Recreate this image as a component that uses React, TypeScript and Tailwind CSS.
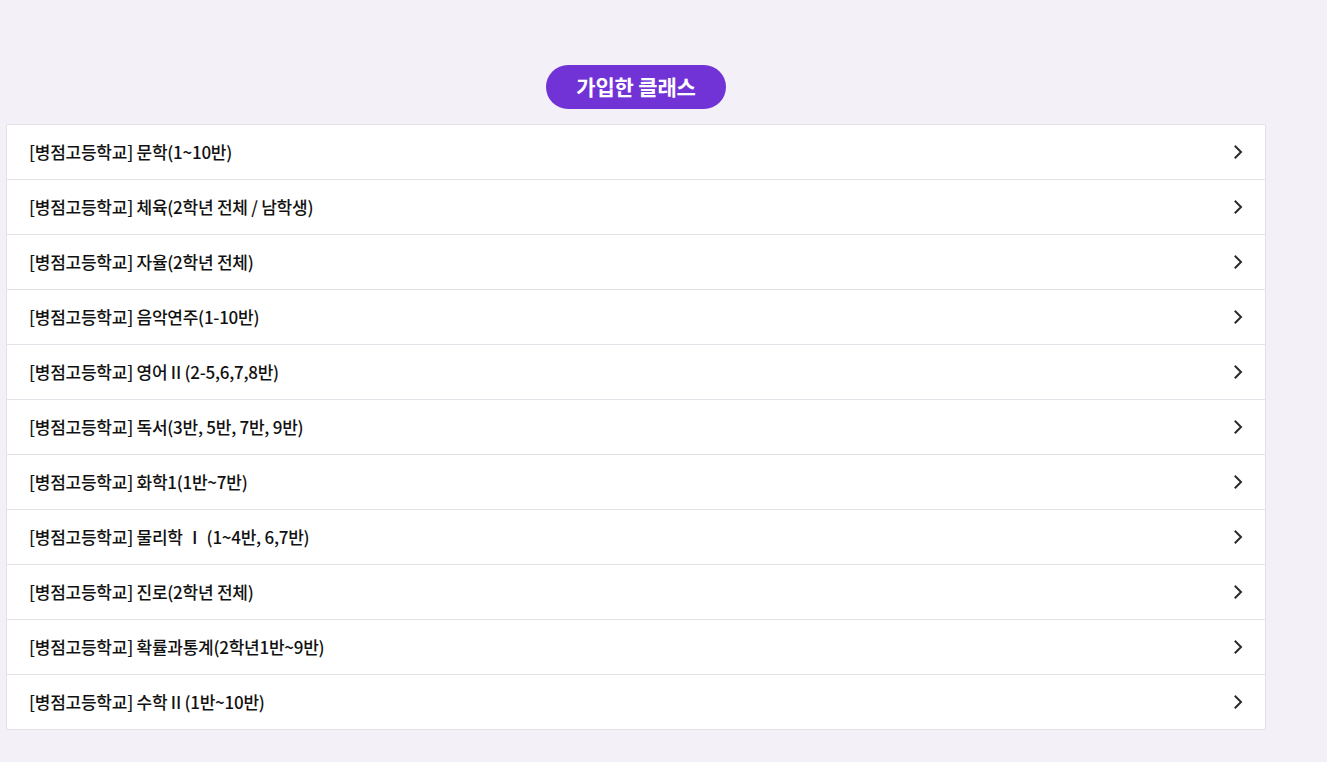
import React from "react";

const items = [
  "[병점고등학교] 문학(1~10반)",
  "[병점고등학교] 체육(2학년 전체 / 남학생)",
  "[병점고등학교] 자율(2학년 전체)",
  "[병점고등학교] 음악연주(1-10반)",
  "[병점고등학교] 영어 II (2-5,6,7,8반)",
  "[병점고등학교] 독서(3반, 5반, 7반, 9반)",
  "[병점고등학교] 화학1(1반~7반)",
  "[병점고등학교] 물리학 Ⅰ (1~4반, 6,7반)",
  "[병점고등학교] 진로(2학년 전체)",
  "[병점고등학교] 확률과통계(2학년1반~9반)",
  "[병점고등학교] 수학 II (1반~10반)",
];

function Chevron() {
  return (
    <svg width="10" height="14" viewBox="0 0 10 14" fill="none">
      <path d="M2.5 1.5 L8 7 L2.5 12.5" stroke="#2b2b2b" strokeWidth="2" strokeLinecap="square" strokeLinejoin="miter" />
    </svg>
  );
}

export default function App() {
  return (
    <div
      className="min-h-[762px] w-full bg-[#f3f0f7] pt-[65px]"
      style={{ fontFamily: '"Noto Sans CJK KR", "Noto Sans", sans-serif' }}
    >
      <div className="ml-[6px] w-[1260px] flex flex-col items-center">
        <div className="h-[44px] w-[180px] rounded-full bg-[#7233d6] flex items-center justify-center text-white text-[21px] font-bold tracking-[-0.2px]">
          가입한 클래스
        </div>
        <div className="mt-[15px] w-full bg-white border border-[#e4e2e8] rounded-[2px]">
          {items.map((t, i) => (
            <div
              key={i}
              className={`flex items-center justify-between pl-[22px] pr-[22px] ${i > 0 ? "h-[55px] border-t border-[#e4e2e8]" : "h-[54px]"}`}
            >
              <span className="text-[17px] text-[#111] font-medium tracking-[-0.25px]">{t}</span>
              <Chevron />
            </div>
          ))}
        </div>
      </div>
    </div>
  );
}
